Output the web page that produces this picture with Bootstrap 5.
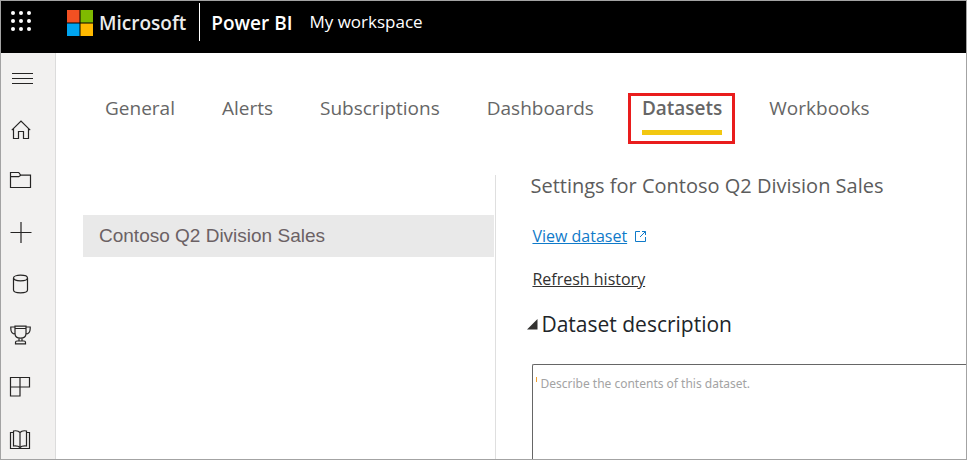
<!DOCTYPE html>
<html lang="en">
<head>
<meta charset="utf-8">
<meta name="viewport" content="width=device-width, initial-scale=1">
<title>Power BI - My workspace</title>
<link href="https://cdn.jsdelivr.net/npm/bootstrap@5.3.0/dist/css/bootstrap.min.css" rel="stylesheet">
<style>
  body { font-family: "Open Sans", "Noto Sans", sans-serif; color: #323130; }
  .app-frame { border: 1px solid #a3a3a3; }
  .app-header { background: #000; height: 52px; padding-left: 6px; }
  .app-header .launcher { width: 28px; height: 28px; margin-bottom: 12px; }
  .ms-brand { margin-left: 32px; margin-bottom: 8px; gap: 6px; }
  .ms-word { font-size: 19px; line-height: 24px; font-weight: 600; color: #ececec; }
  .brand-rule { width: 1px; height: 38px; background: #fff; margin: 0 11px 10px 13px; }
  .product { font-size: 19px; line-height: 24px; font-weight: 600; margin-bottom: 8px; }
  .workspace { font-size: 17px; line-height: 24px; margin: 0 0 10px 17px; }
  .side-nav { width: 55px; background: #f2f1f0; border-right: 1px solid #dcdcdc; }
  .side-nav .nav-btn { height: 51px; padding: 12px 0 0 8px; flex: none; color: #252423; }
  .side-nav svg { display: block; fill: none; stroke: currentColor; stroke-width: 1.2; }
  .tab-row { gap: 47px; padding: 43px 0 0 49px; }
  .tab-item { font-size: 19px; line-height: 24px; color: #666; padding-bottom: 10px; border-bottom: 5px solid transparent; }
  .tab-active { font-weight: 600; border-bottom-color: #f2c811; }
  .tab-mark { border: 3px solid #e91d1d; padding: 0 10px 6px 11px; margin: -3px -13px -9px -13px; }
  .dataset-pane { flex: 0 0 48.4%; padding: 40px 1px 0 27px; border-right: 1px solid #dfdfdf; }
  .dataset-item { background: #e9e9e9; color: #6b6164; font: 19px/42px "Liberation Sans", Arial, sans-serif; padding-left: 16px; }
  .panes { margin-top: 40px; min-height: 0; }
  .settings-pane { padding: 0 0 0 36px; }
  .settings-title { font-size: 20px; line-height: 22px; color: #5c5c5c; margin-left: -2px; }
  .pane-link { font-size: 16px; line-height: 24px; }
  .view-row { margin-top: 27px; }
  .history-row { margin-top: 19px; line-height: 24px; }
  .link-view { color: #0f7ac9; }
  .section-toggle { font-size: 21px; line-height: 30px; gap: 3px; margin: 18px 0 0 -5px; }
  .desc-box { border: 1px solid #666; border-right: 0; border-bottom: 0; border-radius: 2px 0 0 0; font: 12px/18px "Noto Sans", sans-serif; padding: 10px 7px; margin-top: 25px; resize: none; background: linear-gradient(#f0a030, #f0a030) 3px 12px / 1px 5px no-repeat; }
  .desc-box::placeholder { color: #a3a3a3; opacity: 1; }
</style>
<script src="https://cdn.jsdelivr.net/npm/bootstrap@5.3.0/dist/js/bootstrap.bundle.min.js"></script>
</head>
<body>
<div class="app-frame vh-100 d-flex flex-column overflow-hidden">
  <header class="app-header d-flex align-items-center text-white flex-shrink-0">
    <button class="launcher btn p-0 border-0 d-flex" type="button" aria-label="App launcher">
      <svg width="28" height="28" fill="#fff"><circle cx="6" cy="6" r="2"/><circle cx="14" cy="6" r="2"/><circle cx="22" cy="6" r="2"/><circle cx="6" cy="14" r="2"/><circle cx="14" cy="14" r="2"/><circle cx="22" cy="14" r="2"/><circle cx="6" cy="22" r="2"/><circle cx="14" cy="22" r="2"/><circle cx="22" cy="22" r="2"/></svg>
    </button>
    <div class="ms-brand d-flex align-items-center">
      <svg width="26" height="26" aria-hidden="true"><path fill="#f25022" d="M0 0h12.5v12.5H0z"/><path fill="#7fba00" d="M13.5 0H26v12.5H13.5z"/><path fill="#00a4ef" d="M0 13.5h12.5V26H0z"/><path fill="#ffb900" d="M13.5 13.5H26V26H13.5z"/></svg>
      <span class="ms-word">Microsoft</span>
    </div>
    <div class="brand-rule"></div>
    <span class="product">Power BI</span>
    <span class="workspace">My workspace</span>
  </header>
  <div class="d-flex flex-grow-1 overflow-hidden">
    <nav class="side-nav d-flex flex-column flex-shrink-0 overflow-hidden" aria-label="Main">
      <button class="nav-btn btn border-0 rounded-0 d-flex align-items-start" type="button" aria-label="Menu"><svg width="24" height="28" viewBox="0 -2 24 28"><path d="M3 6.5h21M3 11.5h21M3 16.5h21"/></svg></button>
      <button class="nav-btn btn border-0 rounded-0 d-flex align-items-start" type="button" aria-label="Home"><svg width="24" height="28" viewBox="0 -2 24 28"><path d="M2.800 12.200 12 3l9.200 9.200M4.500 10.700v9.800h5v-7h5v7h5v-9.800"/></svg></button>
      <button class="nav-btn btn border-0 rounded-0 d-flex align-items-start" type="button" aria-label="Browse"><svg width="24" height="28" viewBox="0 -2 24 28"><path d="M1.500 18.500v-15h8.200l2 2.700h9.800v12.300zM1.500 7.700h8.200l2-1.500"/></svg></button>
      <button class="nav-btn btn border-0 rounded-0 d-flex align-items-start" type="button" aria-label="Create"><svg width="24" height="28" viewBox="0 -2 24 28"><path d="M1.500 12.500h21M12 2v21"/></svg></button>
      <button class="nav-btn btn border-0 rounded-0 d-flex align-items-start" type="button" aria-label="Data hub"><svg width="24" height="28" viewBox="0 -3 24 28"><ellipse cx="11.500" cy="6" rx="7" ry="2.800"/><path d="M4.500 6v12c0 1.500 3 2.800 7 2.800s7-1.300 7-2.800V6"/></svg></button>
      <button class="nav-btn btn border-0 rounded-0 d-flex align-items-start" type="button" aria-label="Goals"><svg width="24" height="28" viewBox="0 -3 24 28"><path d="M6 3.200h11v7c0 3-2.200 5-5.500 5S6 13.200 6 10.200zM6 5.500h11M6 4H1.800v1.500c0 3.500 1.500 5.500 4.700 5.700M17 4h4.200v1.500c0 3.500-1.500 5.500-4.700 5.700M10 15v3m3-3v3M6.500 20.800v-1.300c0-1 .7-1.500 1.500-1.500h7c.8 0 1.500.5 1.500 1.500v1.300z"/></svg></button>
      <button class="nav-btn btn border-0 rounded-0 d-flex align-items-start" type="button" aria-label="Apps"><svg width="24" height="28" viewBox="0 -4 24 28"><path d="M1.500 2.500h19v9.500h-19zM11 2.500v18.500H1.500v-9.500"/></svg></button>
      <button class="nav-btn btn border-0 rounded-0 d-flex align-items-start" type="button" aria-label="Learn"><svg width="24" height="28" viewBox="0 -6 24 28"><path d="M4.500 4.500h-3v16h19v-16h-3M11 4.500v15M11 4.500C9.700 3 7 2.500 4.500 3v15c2.500-.3 5 0 6.500 1.500 1.500-1.500 4-1.800 6.500-1.500V3c-2.500-.5-5.200 0-6.500 1.500z"/></svg></button>
    </nav>
    <main class="flex-grow-1 d-flex flex-column overflow-hidden">
      <nav class="tab-row d-flex align-items-start" aria-label="Settings">
        <a class="tab-item text-decoration-none" href="#">General</a>
        <a class="tab-item text-decoration-none" href="#">Alerts</a>
        <a class="tab-item text-decoration-none" href="#">Subscriptions</a>
        <a class="tab-item text-decoration-none" href="#">Dashboards</a>
        <div class="tab-mark d-flex"><a class="tab-item tab-active text-decoration-none" href="#" aria-current="page">Datasets</a></div>
        <a class="tab-item text-decoration-none" href="#">Workbooks</a>
      </nav>
      <div class="panes d-flex flex-grow-1">
        <div class="dataset-pane">
          <a class="dataset-item d-block text-decoration-none" href="#">Contoso Q2 Division Sales</a>
        </div>
        <section class="settings-pane flex-grow-1 d-flex flex-column">
          <h1 class="settings-title fw-normal mb-0">Settings for Contoso Q2 Division Sales</h1>
          <div class="view-row d-flex align-items-center gap-2">
            <a class="pane-link link-view" href="#">View dataset</a>
            <svg width="12" height="12" fill="none" stroke="#0f7ac9" aria-hidden="true"><path d="M5 1.500H.5v10h10V7M7 1.500h3.500V5M10.500 1.500 5 7"/></svg>
          </div>
          <div class="history-row"><a class="pane-link text-reset" href="#">Refresh history</a></div>
          <button class="section-toggle btn p-0 border-0 rounded-0 d-flex align-items-center align-self-start" type="button" aria-expanded="true">
            <svg width="11" height="11" fill="#323130" aria-hidden="true"><path d="M0 10.500 10.500 0v10.500z"/></svg>Dataset description
          </button>
          <textarea class="desc-box flex-grow-1 w-100" aria-label="Dataset description" placeholder="Describe the contents of this dataset."></textarea>
        </section>
      </div>
    </main>
  </div>
</div>
</body>
</html>
